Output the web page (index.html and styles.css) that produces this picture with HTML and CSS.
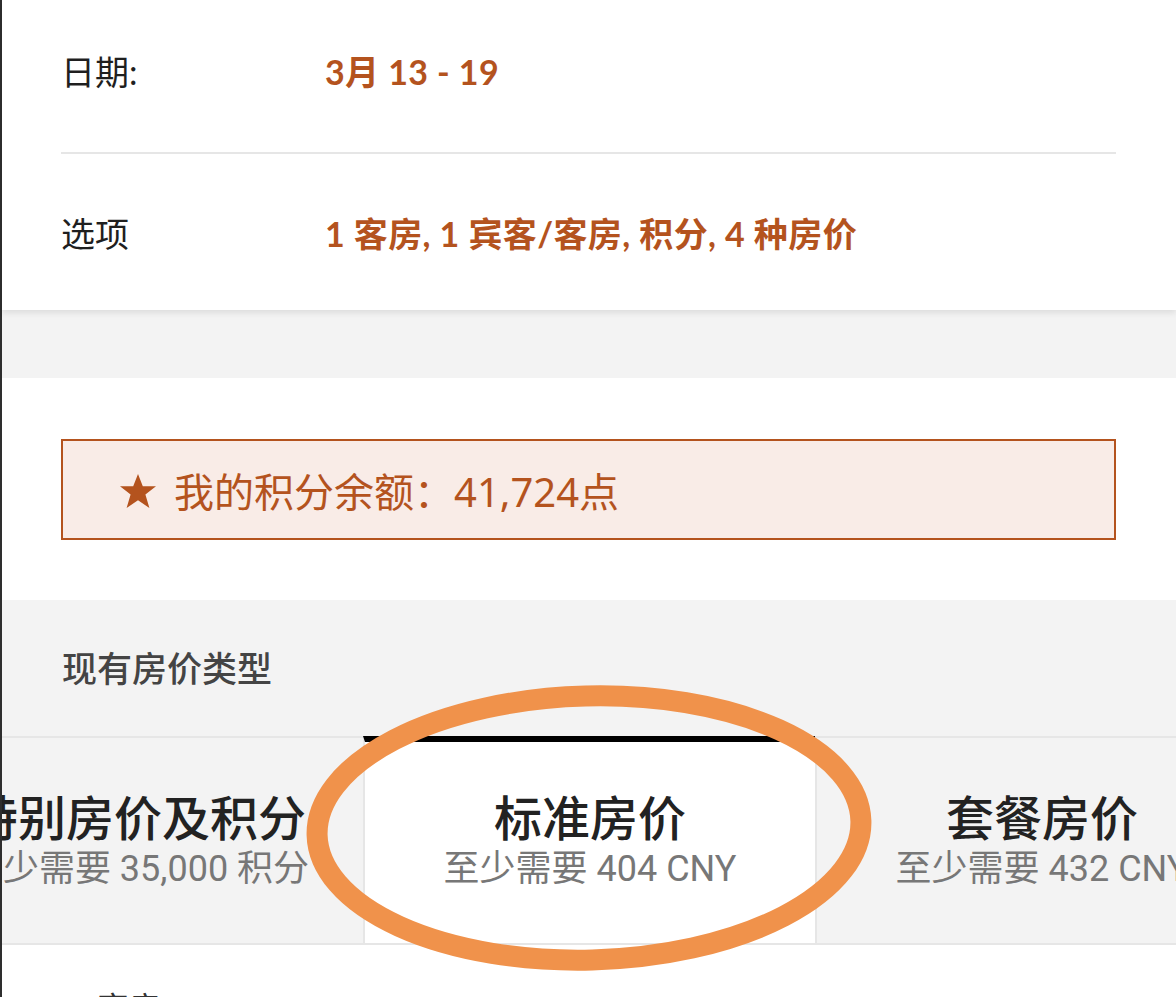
FILE: index.html
```html
<!DOCTYPE html>
<html lang="zh-CN">
<head>
<meta charset="utf-8">
<title>房价</title>
<link rel="stylesheet" href="styles.css">
</head>
<body>
<div class="page">
  <section class="summary">
    <div class="row">
      <div class="label">日期:</div>
      <div class="value">3月 13 - 19</div>
    </div>
    <div class="row">
      <div class="label">选项</div>
      <div class="value">1 客房, 1 宾客/客房, 积分, 4 种房价</div>
    </div>
  </section>

  <div class="spacer"></div>

  <section class="points">
    <div class="points-box">
      <svg class="star" width="36" height="34" viewBox="0 0 36 34"><path d="M18 0 L22.8 12.2 L36 12.2 L25.4 20.6 L29.4 34 L18 26.2 L6.6 34 L10.6 20.6 L0 12.2 L13.2 12.2 Z" fill="#b4531e"/></svg>
      <span class="points-text">我的积分余额：41,724点</span>
    </div>
  </section>

  <section class="rates">
    <h2 class="rates-title">现有房价类型</h2>
    <div class="tabs-viewport">
      <div class="tabs">
        <div class="tab">
          <div class="tab-name">特别房价及积分</div>
          <div class="tab-sub">至少需要 35,000 积分</div>
        </div>
        <div class="tab tab-active">
          <div class="tab-name">标准房价</div>
          <div class="tab-sub">至少需要 404 CNY</div>
        </div>
        <div class="tab">
          <div class="tab-name">套餐房价</div>
          <div class="tab-sub">至少需要 432 CNY</div>
        </div>
      </div>
    </div>
  </section>

  <section class="rooms">
    <div class="rooms-head">客房</div>
  </section>

  <svg class="annotation" width="600" height="310" viewBox="0 0 600 310">
    <ellipse cx="300" cy="155" rx="272" ry="132" fill="none" stroke="#f0924b" stroke-width="21" transform="rotate(-1.5 300 155)"/>
  </svg>
</div>
</body>
</html>
```

FILE: styles.css
```css
html, body {
  margin: 0;
  padding: 0;
  background: #ffffff;
}

body {
  width: 1176px;
  height: 997px;
  overflow: hidden;
  font-family: "Noto Sans CJK SC", "Noto Sans", sans-serif;
}

.page {
  position: relative;
  border-left: 2px solid #2e2e2e;
  min-height: 997px;
  box-sizing: border-box;
}

.summary {
  background: #ffffff;
  padding: 0 60px 0 59px;
  box-shadow: 0 3px 6px rgba(0, 0, 0, 0.09);
  position: relative;
  z-index: 1;
}

.row {
  display: flex;
  align-items: center;
  height: 152px;
}

.row:first-child {
  padding-bottom: 12px;
  height: 140px;
}

.row + .row {
  border-top: 2px solid #e6e6e6;
  height: 156px;
}

.label {
  width: 264px;
  flex: none;
  font-size: 34px;
  font-weight: 400;
  color: #1f1f1f;
  font-family: "Lato", "Noto Sans CJK SC", sans-serif;
}

.value {
  font-size: 34px;
  font-weight: 700;
  letter-spacing: 0.4px;
  color: #b4531e;
  font-family: "Lato", "Noto Sans CJK SC", sans-serif;
}

.spacer {
  height: 68px;
  background: #f3f3f3;
}

.points {
  background: #ffffff;
  padding: 61px 60px 60px 59px;
}

.points-box {
  height: 97px;
  border: 2px solid #b4531e;
  background: #f9ece7;
  display: flex;
  align-items: center;
  padding-left: 57px;
  color: #b4531e;
}

.star {
  flex: none;
  margin-right: 18px;
  position: relative;
  top: 1px;
}

.points-text {
  font-family: "Noto Sans", "Noto Sans CJK SC", sans-serif;
  font-size: 40px;
}

.rates {
  background: #f3f3f3;
  padding-top: 42px;
}

.rates-title {
  margin: 0 0 44px 60px;
  font-size: 35px;
  font-weight: 500;
  color: #444444;
  line-height: 50px;
}

.tabs-viewport {
  overflow: hidden;
}

.tabs {
  display: flex;
  margin-left: -91px;
}

.tab {
  flex: none;
  width: 452px;
  height: 209px;
  box-sizing: border-box;
  border: 2px solid #e6e6e6;
  border-right: none;
  background: #f3f3f3;
  display: flex;
  flex-direction: column;
  align-items: center;
  padding-top: 54px;
  font-family: "Roboto", "Noto Sans CJK SC", sans-serif;
}

.tab-active {
  background: #ffffff;
  border-top: 6px solid #000000;
  padding-top: 50px;
}

.tab-name {
  font-size: 48px;
  font-weight: 500;
  color: #222222;
  line-height: 56px;
  white-space: nowrap;
}

.tab-sub {
  font-size: 36px;
  color: #777777;
  line-height: 42px;
  white-space: nowrap;
}

.rooms {
  background: #ffffff;
  padding: 41px 0 0 95px;
}

.rooms-head {
  font-size: 32px;
  color: #333333;
  line-height: 40px;
}

.annotation {
  position: absolute;
  left: 287px;
  top: 673px;
  z-index: 2;
  pointer-events: none;
}
```
